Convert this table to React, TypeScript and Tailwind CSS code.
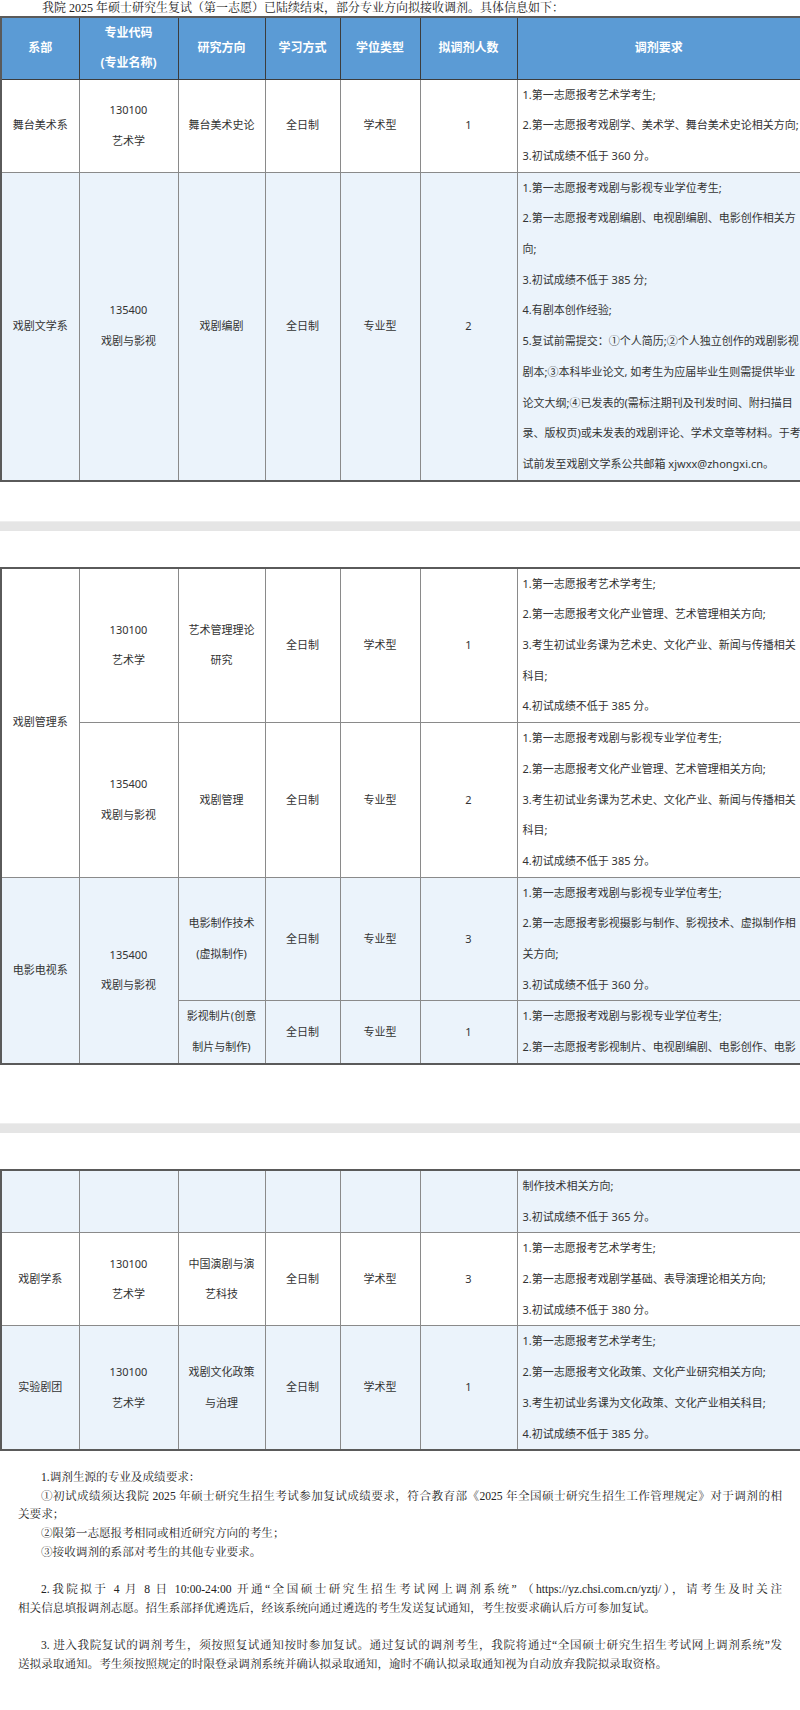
const SANS = { fontFamily: '"Noto Sans", "Noto Sans CJK SC", sans-serif' };

type Row = {
  bg: "white" | "blue";
  dept?: { text: string[]; span: number };
  major?: { text: string[]; span: number };
  dir: string[];
  mode: string;
  degree: string;
  count: string;
  reqs: string[];
};

const COLS = [78, 99, 87, 75, 80, 97, 284];

function Lines({ lines }: { lines: string[] }) {
  return (
    <>
      {lines.map((l, i) => (
        <div key={i} className="whitespace-nowrap">
          {l}
        </div>
      ))}
    </>
  );
}

const cell = "border border-[#8a8a8a] text-center align-middle px-1 leading-[30.7px]";

function TableRows({ rows }: { rows: Row[] }) {
  return (
    <>
      {rows.map((r, i) => (
        <tr key={i} className={r.bg === "blue" ? "bg-[#ebf3fb]" : "bg-white"}>
          {r.dept && (
            <td rowSpan={r.dept.span} className={cell}>
              <Lines lines={r.dept.text} />
            </td>
          )}
          {r.major && (
            <td rowSpan={r.major.span} className={cell}>
              <Lines lines={r.major.text} />
            </td>
          )}
          <td className={cell}>
            <Lines lines={r.dir} />
          </td>
          <td className={cell}>{r.mode}</td>
          <td className={cell}>{r.degree}</td>
          <td className={cell}>{r.count}</td>
          <td className="border border-[#8a8a8a] text-left align-middle pl-[5px] pr-1 leading-[30.7px]">
            <Lines lines={r.reqs} />
          </td>
        </tr>
      ))}
    </>
  );
}

function Table({ rows, header }: { rows: Row[]; header?: boolean }) {
  return (
    <table
      className="w-[800px] table-fixed border-collapse border-2 border-[#5a5a5a] text-[11px] text-[#333]"
      style={SANS}
    >
      <colgroup>
        {COLS.map((w, i) => (
          <col key={i} style={{ width: w }} />
        ))}
      </colgroup>
      {header && (
        <thead>
          <tr className="bg-[#5b9bd5] text-white text-[12px] font-bold">
            {["系部", "", "研究方向", "学习方式", "学位类型", "拟调剂人数", "调剂要求"].map((h, i) => (
              <th key={i} className="border border-[#3c3c3c] text-center align-middle leading-[30px] h-[62px] font-bold">
                {i === 1 ? (
                  <>
                    <div>专业代码</div>
                    <div>(专业名称)</div>
                  </>
                ) : (
                  h
                )}
              </th>
            ))}
          </tr>
        </thead>
      )}
      <tbody>
        <TableRows rows={rows} />
      </tbody>
    </table>
  );
}

const section1: Row[] = [
  {
    bg: "white",
    dept: { text: ["舞台美术系"], span: 1 },
    major: { text: ["130100", "艺术学"], span: 1 },
    dir: ["舞台美术史论"],
    mode: "全日制",
    degree: "学术型",
    count: "1",
    reqs: ["1.第一志愿报考艺术学考生;", "2.第一志愿报考戏剧学、美术学、舞台美术史论相关方向;", "3.初试成绩不低于 360 分。"],
  },
  {
    bg: "blue",
    dept: { text: ["戏剧文学系"], span: 1 },
    major: { text: ["135400", "戏剧与影视"], span: 1 },
    dir: ["戏剧编剧"],
    mode: "全日制",
    degree: "专业型",
    count: "2",
    reqs: [
      "1.第一志愿报考戏剧与影视专业学位考生;",
      "2.第一志愿报考戏剧编剧、电视剧编剧、电影创作相关方",
      "向;",
      "3.初试成绩不低于 385 分;",
      "4.有剧本创作经验;",
      "5.复试前需提交：①个人简历;②个人独立创作的戏剧影视",
      "剧本;③本科毕业论文, 如考生为应届毕业生则需提供毕业",
      "论文大纲;④已发表的(需标注期刊及刊发时间、附扫描目",
      "录、版权页)或未发表的戏剧评论、学术文章等材料。于考",
      "试前发至戏剧文学系公共邮箱 xjwxx@zhongxi.cn。",
    ],
  },
];

const section2: Row[] = [
  {
    bg: "white",
    dept: { text: ["戏剧管理系"], span: 2 },
    major: { text: ["130100", "艺术学"], span: 1 },
    dir: ["艺术管理理论", "研究"],
    mode: "全日制",
    degree: "学术型",
    count: "1",
    reqs: [
      "1.第一志愿报考艺术学考生;",
      "2.第一志愿报考文化产业管理、艺术管理相关方向;",
      "3.考生初试业务课为艺术史、文化产业、新闻与传播相关",
      "科目;",
      "4.初试成绩不低于 385 分。",
    ],
  },
  {
    bg: "white",
    major: { text: ["135400", "戏剧与影视"], span: 1 },
    dir: ["戏剧管理"],
    mode: "全日制",
    degree: "专业型",
    count: "2",
    reqs: [
      "1.第一志愿报考戏剧与影视专业学位考生;",
      "2.第一志愿报考文化产业管理、艺术管理相关方向;",
      "3.考生初试业务课为艺术史、文化产业、新闻与传播相关",
      "科目;",
      "4.初试成绩不低于 385 分。",
    ],
  },
  {
    bg: "blue",
    dept: { text: ["电影电视系"], span: 2 },
    major: { text: ["135400", "戏剧与影视"], span: 2 },
    dir: ["电影制作技术", "(虚拟制作)"],
    mode: "全日制",
    degree: "专业型",
    count: "3",
    reqs: [
      "1.第一志愿报考戏剧与影视专业学位考生;",
      "2.第一志愿报考影视摄影与制作、影视技术、虚拟制作相",
      "关方向;",
      "3.初试成绩不低于 360 分。",
    ],
  },
  {
    bg: "blue",
    dir: ["影视制片(创意", "制片与制作)"],
    mode: "全日制",
    degree: "专业型",
    count: "1",
    reqs: ["1.第一志愿报考戏剧与影视专业学位考生;", "2.第一志愿报考影视制片、电视剧编剧、电影创作、电影"],
  },
];

const section3: Row[] = [
  {
    bg: "blue",
    dept: { text: [""], span: 1 },
    major: { text: [""], span: 1 },
    dir: [""],
    mode: "",
    degree: "",
    count: "",
    reqs: ["制作技术相关方向;", "3.初试成绩不低于 365 分。"],
  },
  {
    bg: "white",
    dept: { text: ["戏剧学系"], span: 1 },
    major: { text: ["130100", "艺术学"], span: 1 },
    dir: ["中国演剧与演", "艺科技"],
    mode: "全日制",
    degree: "学术型",
    count: "3",
    reqs: ["1.第一志愿报考艺术学考生;", "2.第一志愿报考戏剧学基础、表导演理论相关方向;", "3.初试成绩不低于 380 分。"],
  },
  {
    bg: "blue",
    dept: { text: ["实验剧团"], span: 1 },
    major: { text: ["130100", "艺术学"], span: 1 },
    dir: ["戏剧文化政策", "与治理"],
    mode: "全日制",
    degree: "学术型",
    count: "1",
    reqs: [
      "1.第一志愿报考艺术学考生;",
      "2.第一志愿报考文化政策、文化产业研究相关方向;",
      "3.考生初试业务课为文化政策、文化产业相关科目;",
      "4.初试成绩不低于 385 分。",
    ],
  },
];

const SERIF = { fontFamily: '"Liberation Serif", "Noto Serif CJK SC", "Noto Sans CJK SC", serif' };

// a justified line that fills the column, the last one of a paragraph is left aligned
function J({ children, indent, last }: { children: React.ReactNode; indent?: boolean; last?: boolean }) {
  return (
    <div className={`${indent ? "pl-[23px]" : ""} ${last ? "" : "text-justify [text-align-last:justify]"}`}>{children}</div>
  );
}

export default function App() {
  return (
    <div className="w-[800px] bg-white">
      <div className="h-[16px] pl-[42px] text-[12px] leading-[16px] text-[#222] whitespace-nowrap" style={SERIF}>
        我院 2025 年硕士研究生复试（第一志愿）已陆续结束，部分专业方向拟接收调剂。具体信息如下：
      </div>

      <Table rows={section1} header />

      {/* page break */}
      <div className="h-[39px]" />
      <div className="h-[10px] bg-[#e5e5e5] border-t border-[#eeeeee]" />
      <div className="h-[36px]" />

      <Table rows={section2} />

      <div className="h-[58px]" />
      <div className="h-[10px] bg-[#e5e5e5] border-t border-[#eeeeee]" />
      <div className="h-[36px]" />

      <Table rows={section3} />

      <div className="px-[18px] pt-[18px] pb-[40px] text-[11.6px] leading-[18.6px] text-[#222]" style={SERIF}>
        <J indent last>1.调剂生源的专业及成绩要求：</J>
        <J indent>①初试成绩须达我院 2025 年硕士研究生招生考试参加复试成绩要求，符合教育部《2025 年全国硕士研究生招生工作管理规定》对于调剂的相</J>
        <J last>关要求；</J>
        <J indent last>②限第一志愿报考相同或相近研究方向的考生；</J>
        <J indent last>③接收调剂的系部对考生的其他专业要求。</J>
        <div className="h-[19px]" />
        <J indent>2.我院拟于 4 月 8 日 10:00-24:00 开通“全国硕士研究生招生考试网上调剂系统” （https://yz.chsi.com.cn/yztj/），请考生及时关注</J>
        <J last>相关信息填报调剂志愿。招生系部择优遴选后，经该系统向通过遴选的考生发送复试通知，考生按要求确认后方可参加复试。</J>
        <div className="h-[19px]" />
        <J indent>3. 进入我院复试的调剂考生，须按照复试通知按时参加复试。通过复试的调剂考生，我院将通过“全国硕士研究生招生考试网上调剂系统”发</J>
        <J last>送拟录取通知。考生须按照规定的时限登录调剂系统并确认拟录取通知，逾时不确认拟录取通知视为自动放弃我院拟录取资格。</J>
      </div>
    </div>
  );
}
